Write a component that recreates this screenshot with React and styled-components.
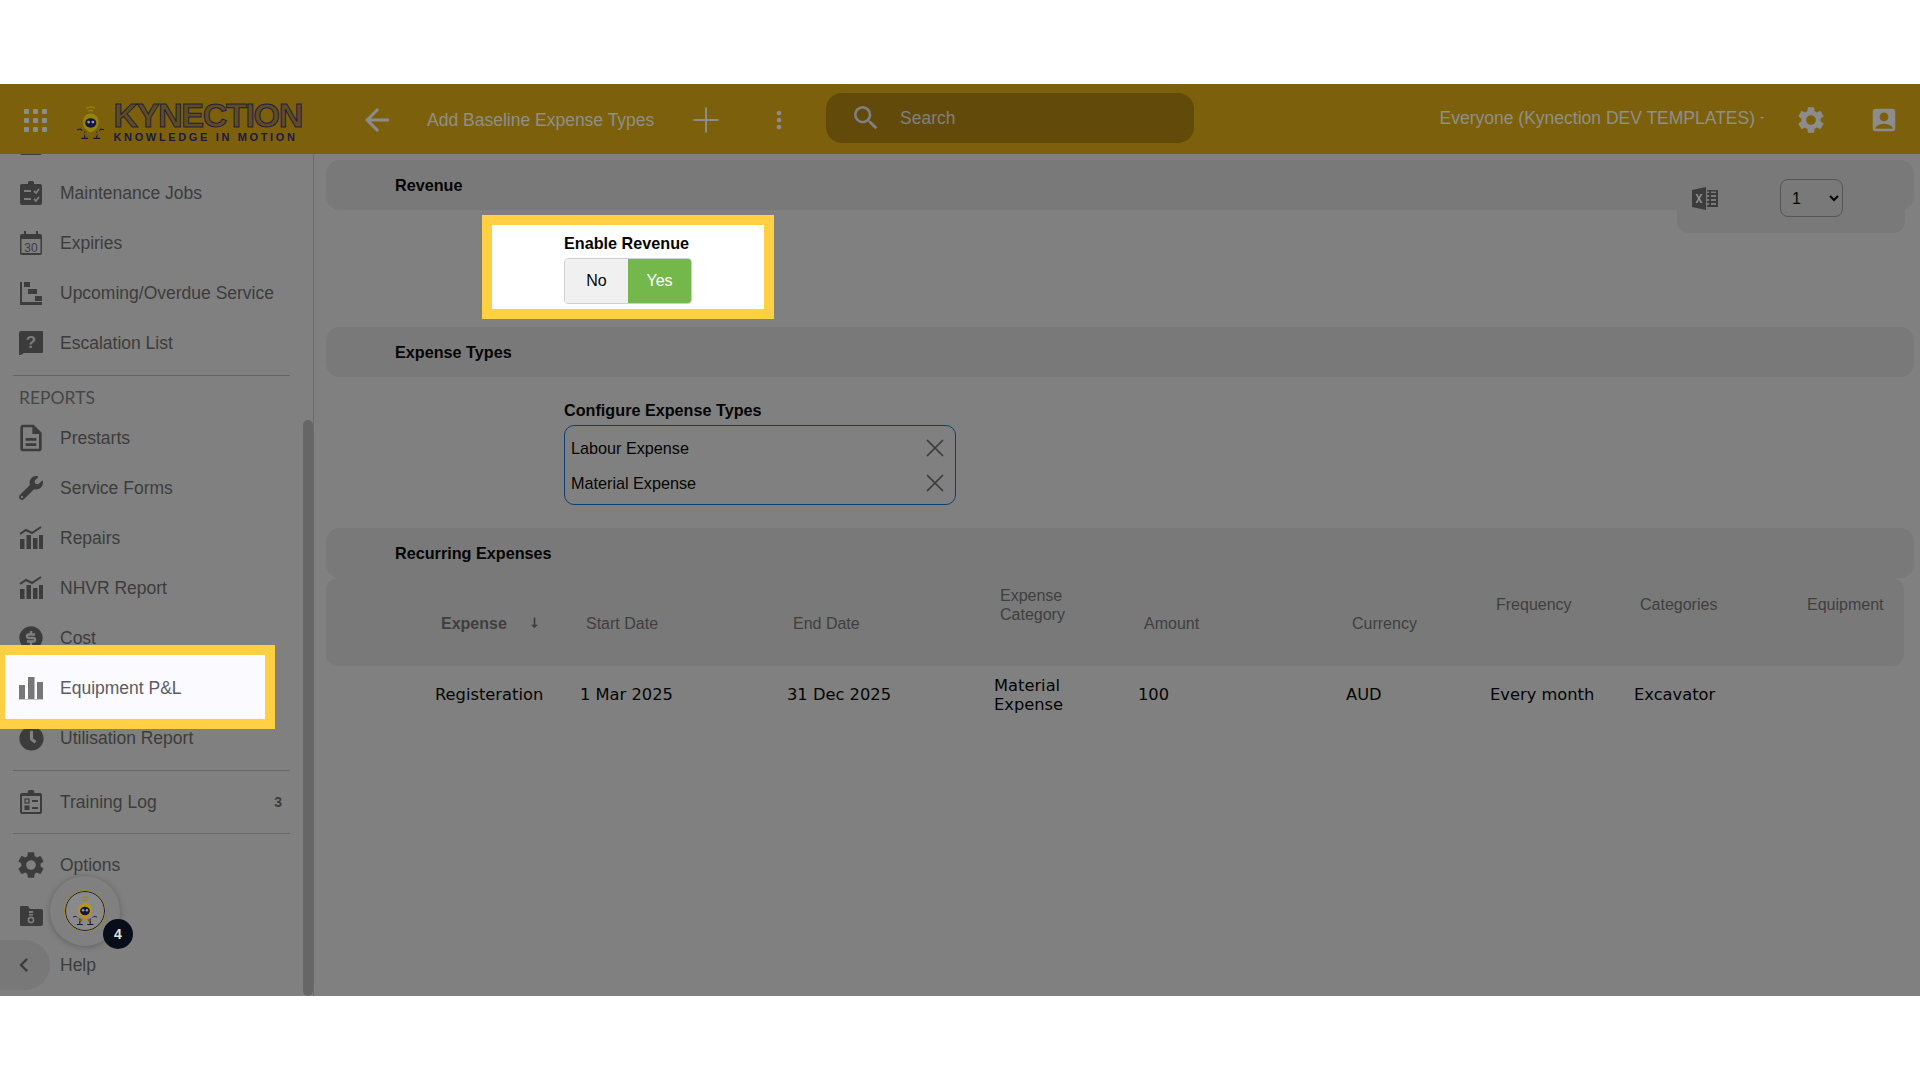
import React from "react";
import styled, { createGlobalStyle } from "styled-components";
import { MdArrowBack, MdSearch, MdSettings, MdAccountBox, MdMoreVert, MdChevronLeft, MdOutlineDescription } from "react-icons/md";
import { FaWrench, FaClock } from "react-icons/fa";
import { RiMoneyDollarCircleFill } from "react-icons/ri";
import { Plus, X } from "lucide-react";

const GlobalStyle = createGlobalStyle`
  html, body {
    margin: 0;
    padding: 0;
    background: #ffffff;
  }
  *, *::before, *::after {
    box-sizing: border-box;
  }
`;

const Svg = ({ children }) => (
  <svg width="24" height="24" viewBox="0 0 24 24" fill="currentColor">{children}</svg>
);

const JobsIcon = () => (
  <Svg>
    <rect x="1" y="3" width="22" height="21" rx="2" />
    <rect x="9" y="0" width="6" height="5" rx="1.5" />
    <path d="M5 10h7M5 18h7M15 10l2 2 3-4M15 18l2 2 3-4" stroke="#7d7d7d" strokeWidth="1.8" fill="none" />
  </Svg>
);

const CalendarIcon = () => (
  <Svg>
    <path d="M1 5a2 2 0 0 1 2-2h2V0h2v3h10V0h2v3h2a2 2 0 0 1 2 2v17a2 2 0 0 1-2 2H3a2 2 0 0 1-2-2V5zm1.500 3v14h19V8H2.500z" fillRule="evenodd" />
    <text x="12" y="20.500" textAnchor="middle" fontSize="12" fontFamily="Liberation Sans, sans-serif">30</text>
  </Svg>
);

const GanttIcon = () => (
  <Svg>
    <path d="M1 1h2v20h20v3H1V1z" />
    <rect x="5" y="1" width="6" height="5" />
    <rect x="9" y="8" width="9" height="5" />
    <rect x="16" y="15" width="7" height="5" />
  </Svg>
);

const QuestionIcon = () => (
  <Svg>
    <path d="M2 0h21a1 1 0 0 1 1 1v20a1 1 0 0 1-1 1H5l-5 3V2a2 2 0 0 1 2-2z" />
    <text x="12" y="17" textAnchor="middle" fontSize="17" fontWeight="700" fill="#7d7d7d" fontFamily="Liberation Sans, sans-serif">?</text>
  </Svg>
);

const TrendIcon = () => (
  <Svg>
    <rect x="1" y="13" width="4.500" height="10" />
    <rect x="7.500" y="9" width="4.500" height="14" />
    <rect x="14" y="12" width="4.500" height="11" />
    <rect x="20" y="9" width="4" height="14" />
    <path d="M1 8l6-4 6 3 9-6" stroke="currentColor" strokeWidth="2" fill="none" />
  </Svg>
);

const BarsIcon = () => (
  <Svg>
    <rect x="0" y="9" width="6" height="14" />
    <rect x="9" y="1" width="6.500" height="22" />
    <rect x="18" y="6" width="6" height="17" />
    <rect x="0" y="23" width="24" height="1" opacity="0.4" />
  </Svg>
);

const TrainingIcon = () => (
  <Svg>
    <path d="M3 3h5.500a3.500 3.500 0 0 1 7 0H21a2 2 0 0 1 2 2v17a2 2 0 0 1-2 2H3a2 2 0 0 1-2-2V5a2 2 0 0 1 2-2zm0 3v16h18V6H3z" fillRule="evenodd" />
    <rect x="6" y="9" width="4" height="4" fill="none" stroke="currentColor" strokeWidth="1.2" />
    <rect x="5.500" y="15.500" width="5" height="4.500" />
    <rect x="13" y="10" width="6" height="2" />
    <rect x="13" y="17" width="6" height="2" />
  </Svg>
);

const FolderIcon = () => (
  <Svg>
    <path d="M1 4a1 1 0 0 1 1-1h7l2 3h11a2 2 0 0 1 2 2v13a2 2 0 0 1-2 2H2a1 1 0 0 1-1-1V4z" />
    <path d="M10 8h4v2h-4zM10 11h4v1.500h-4z" fill="#7d7d7d" />
    <circle cx="12" cy="17" r="2.600" fill="none" stroke="#7d7d7d" strokeWidth="1.600" />
  </Svg>
);

const ClippedIcon = () => (
  <Svg>
    <rect x="1" y="0" width="22" height="24" rx="2" />
  </Svg>
);

const ExcelIcon = () => (
  <svg width="26" height="23" viewBox="0 0 26 23" fill="currentColor">
    <path d="M0 3l14-3v23L0 20V3z" />
    <path d="M3.500 7h2l1.500 3 1.500-3h2L8 11.500l2.500 4.500h-2L7 13l-1.500 3h-2L6 11.500 3.500 7z" fill="#8a8a8a" />
    <path d="M15 3h11v17H15v-2h2v-2h-2v-2h2v-2h-2v-2h2V8h-2V6h2V4.500h-2V3zm4 1.500V6h5V4.500h-5zM19 8v2h5V8h-5zm0 4v2h5v-2h-5zm0 4v2h5v-2h-5z" fillRule="evenodd" />
  </svg>
);

const Mascot = ({ size = 32, body = "#94850e" }) => (
  <svg width={size} height={size * 1.22} viewBox="0 0 32 39">
    <path d="M11 3c3-2 7-2 10 0M13 6c2-1 4-1 6 0" stroke="#9a8412" strokeWidth="1.4" fill="none" />
    <path d="M16 9c6 0 9 5 9 11 0 5-4 9-9 11-5-2-9-6-9-11 0-6 3-11 9-11z" fill={body} />
    <ellipse cx="16" cy="20" rx="6.500" ry="5.600" fill="#14163f" />
    <circle cx="13.500" cy="19" r="1.600" fill="#9a9a9a" />
    <circle cx="18.500" cy="19" r="1.600" fill="#9a9a9a" />
    <path d="M0 28l4-1 2 2M32 28l-4-1-2 2" stroke="#14163f" strokeWidth="1.2" fill="none" />
    <path d="M9 30v7M5 38h8M23 30v7M19 38h8" stroke="#14163f" strokeWidth="1.600" fill="none" />
    <path d="M7 31l3 5 3-5zM19 31l3 5 3-5z" fill="#7a5c10" />
  </svg>
);

const Page = styled.div`
  padding: 84px 0;
  width: 1920px;
  height: 1080px;
  overflow: hidden;
  background: #ffffff;
`;

const Shell = styled.div`
  height: 912px;
  background: #808080;
  display: flex;
  flex-direction: column;
  font-family: "Liberation Sans", Arial, sans-serif;
  overflow: hidden;
`;

const TopBar = styled.header`
  height: 70px;
  flex: none;
  padding-top: 2px;
  background: #7c600c;
  display: flex;
  align-items: center;
  color: #8a8a85;
  position: relative;
`;

const AppGrid = styled.div`
  width: 23px;
  margin-left: 24px;
  display: grid;
  grid-template-columns: repeat(3, 5px);
  gap: 4px;
  flex: none;
`;

const AppDot = styled.span`
  width: 5px;
  height: 5px;
  border-radius: 1px;
  background: #8c8c8c;
`;

const Logo = styled.div`
  margin-left: 30px;
  margin-top: 4px;
  width: 225px;
  display: flex;
  align-items: flex-end;
  gap: 9px;
  flex: none;
`;

const LogoWords = styled.div`
  display: flex;
  flex-direction: column;
  color: #1a1a48;
`;

const LogoName = styled.div`
  font-size: 34px;
  line-height: 26px;
  height: 26px;
  font-weight: 700;
  letter-spacing: -1.3px;
  color: rgba(26, 26, 72, 0.3);
  -webkit-text-stroke: 1px #1e1e4a;
  white-space: nowrap;
`;

const LogoTag = styled.div`
  font-size: 11px;
  line-height: 11px;
  font-weight: 700;
  letter-spacing: 2.65px;
  white-space: nowrap;
  margin-top: 4px;
`;

const BackButton = styled.div`
  margin-left: 57px;
  width: 36px;
  display: flex;
  flex: none;
  color: #8c8c8c;
  svg { display: block; }
`;

const Title = styled.div`
  margin-left: 32px;
  font-size: 17.5px;
  white-space: nowrap;
  width: 227px;
  color: #8f8f8a;
`;

const PlusButton = styled.div`
  margin-left: 32px;
  display: flex;
  color: #8c8c8c;
`;

const MoreButton = styled.div`
  margin-left: 39px;
  display: flex;
  color: #8c8c8c;
`;

const SearchBox = styled.div`
  margin-left: 33px;
  width: 368px;
  height: 50px;
  margin-top: -4px;
  border-radius: 16px;
  background: #624b0a;
  display: flex;
  align-items: center;
  padding-left: 24px;
  gap: 18px;
  color: #808080;
  font-size: 17.5px;
`;

const UserArea = styled.div`
  margin-left: auto;
  display: flex;
  align-items: center;
  padding-right: 21px;
  margin-top: -4px;
`;

const Team = styled.div`
  font-size: 17.5px;
  white-space: nowrap;
  color: #8f8f8a;
`;

const Caret = styled.span`
  width: 0;
  height: 0;
  margin-left: 5px;
  border-left: 2.5px solid transparent;
  border-right: 2.5px solid transparent;
  border-top: 2.5px solid #8f8f8a;
`;

const TopIcon = styled.div`
  display: flex;
  margin-left: ${(p) => p.$gap}px;
  color: #8c8c8c;
  margin-top: 4px;
`;

const Body = styled.div`
  flex: 1;
  min-height: 0;
  display: flex;
`;

const Sidebar = styled.aside`
  width: 314px;
  flex: none;
  border-right: 1px solid #6b6b6b;
  position: relative;
  overflow: hidden;
  color: #3c3c3c;
`;

const SideList = styled.nav`
  margin-top: -36px;
  width: 303px;
`;

const SideRow = styled.div`
  height: 50px;
  display: flex;
  align-items: center;
  padding-left: 19px;
  padding-right: 21px;
  gap: 17px;
  font-size: 17.5px;
  position: relative;
  z-index: ${(p) => (p.$active ? 3 : "auto")};
  color: ${(p) => (p.$active ? "#5c5c62" : "#3c3c3c")};

  ${(p) => p.$active && `
    &::before {
      content: "";
      position: absolute;
      left: 0;
      top: -18px;
      bottom: -16px;
      width: 275px;
      background: #fafaff;
      border: 10px solid #ffd043;
      border-left-width: 5px;
    }
    svg { color: #777777; }
  `}
`;

const SideIcon = styled.span`
  position: relative;
  display: flex;
  width: 24px;
  justify-content: center;
  flex: none;
`;

const SideLabel = styled.span`
  position: relative;
  white-space: nowrap;
`;

const Count = styled.span`
  margin-left: auto;
  font-size: 14px;
  font-weight: 700;
`;

const Divider = styled.hr`
  border: 0;
  height: 1px;
  background: #666666;
  margin: ${(p) => p.$top}px 13px ${(p) => p.$bottom}px;
`;

const SideHeading = styled.div`
  height: 37px;
  padding: 13px 0 0 19px;
  font-family: Lato, sans-serif;
  font-size: 17.5px;
  line-height: 18px;
  color: #464646;
`;

const ScrollThumb = styled.div`
  position: absolute;
  right: 0;
  top: 266px;
  bottom: 0;
  width: 10px;
  border-radius: 5px;
  background: #666666;
`;

const CollapsePill = styled.div`
  position: absolute;
  left: 0;
  top: 786px;
  width: 50px;
  height: 50px;
  border-radius: 0 25px 25px 0;
  background: #787878;
  display: flex;
  align-items: center;
  padding-left: 10px;
  color: #3c3c3c;
`;

const FloatingButton = styled.div`
  position: absolute;
  left: 50px;
  top: 722px;
  width: 70px;
  height: 70px;
  border-radius: 50%;
  background: #808080;
  box-shadow: 0 1px 6px rgba(0, 0, 0, 0.25);
  display: flex;
  align-items: center;
  justify-content: center;
`;

const Seal = styled.div`
  width: 40px;
  height: 40px;
  border-radius: 50%;
  border: 1.5px solid #1a1a48;
  outline: 1px solid #a08a1a;
  display: flex;
  align-items: center;
  justify-content: center;
  background: #8a8a8a;
`;

const Badge = styled.div`
  position: absolute;
  left: 103px;
  top: 765px;
  width: 30px;
  height: 30px;
  border-radius: 50%;
  background: #080d1a;
  color: #e0e0e0;
  display: flex;
  align-items: center;
  justify-content: center;
  font-size: 14px;
  font-weight: 700;
`;

const Content = styled.main`
  flex: 1;
  min-width: 0;
  padding: 6px 6px 0 12px;
  position: relative;
`;

const Band = styled.div`
  height: 50px;
  border-radius: 14px;
  background: #797979;
  display: flex;
  align-items: center;
  padding: 1px 0 0 69px;
  font-size: 16.2px;
  font-weight: 700;
  color: #050505;
`;

const ExportPanel = styled.div`
  position: absolute;
  top: 22px;
  right: 15px;
  width: 228px;
  height: 57px;
  border-radius: 0 0 12px 12px;
  background: #797979;
  display: flex;
  align-items: center;
  padding: 0 62px 13px 15px;
  justify-content: space-between;
  color: #3c3c3c;
`;

const PageSelect = styled.select`
  width: 63px;
  height: 38px;
  border: 1px solid #555555;
  border-radius: 8px;
  background: transparent;
  font-family: "Liberation Sans", Arial, sans-serif;
  font-size: 16px;
  color: #050505;
  padding-left: 7px;
`;

const HighlightCard = styled.div`
  width: 292px;
  height: 104px;
  margin: 5px 0 8px 156px;
  border: 10px solid #ffd043;
  background: #ffffff;
  padding: 8px 0 0 72px;
`;

const FieldLabel = styled.div`
  font-size: 16.2px;
  line-height: 20px;
  font-weight: 700;
  color: #050505;
`;

const Toggle = styled.div`
  display: flex;
  width: 128px;
  height: 46px;
  margin-top: 5px;
  border: 1px solid #cfcfcf;
  border-radius: 4px;
  overflow: hidden;
`;

const ToggleOption = styled.div`
  flex: 1;
  display: flex;
  align-items: center;
  justify-content: center;
  font-size: 16px;
  background: ${(p) => (p.$on ? "#74b74a" : "#f0f0f0")};
  color: ${(p) => (p.$on ? "#ffffff" : "#050505")};
`;

const ConfigureBlock = styled.div`
  margin: 23px 0 23px 238px;
  width: 392px;
`;

const ChipBox = styled.div`
  margin-top: 5px;
  height: 80px;
  border: 1px solid #0f4170;
  border-radius: 10px;
  padding: 5px 6px;
  color: #050505;
  font-size: 16.2px;
`;

const ChipRow = styled.div`
  height: 35px;
  display: flex;
  align-items: center;
  justify-content: space-between;
  svg { color: #3c3c3c; margin: -2px -1px 0 0; }
`;

const HeaderBand = styled.div`
  margin-right: 10px;
  height: 88px;
  padding-top: 1px;
  border-radius: 12px;
  background: #797979;
  padding-left: 109px;
  display: grid;
  grid-template-columns: 145px 207px 207px 144px 208px 144px 144px 167px 1fr;
  color: #3f3f3f;
  font-size: 16px;
`;

const HeadCell = styled.div`
  padding: ${(p) => p.$top}px 0 0 6px;
  line-height: 19px;
  font-weight: ${(p) => (p.$bold ? 700 : 400)};
  display: flex;
  gap: 24px;
  white-space: pre-line;
`;

const SortArrow = styled.svg`
  margin-top: 2px;
`;

const DataRow = styled.div`
  height: 56px;
  padding: 1px 0 0 109px;
  display: grid;
  grid-template-columns: 145px 207px 207px 144px 208px 144px 144px 167px 1fr;
  align-items: center;
  font-family: "DejaVu Sans", sans-serif;
  font-size: 16.3px;
  line-height: 19px;
  color: #050505;
  white-space: pre-line;
`;

const topItems = [
  { icon: <ClippedIcon />, label: "" },
  { icon: <JobsIcon />, label: "Maintenance Jobs" },
  { icon: <CalendarIcon />, label: "Expiries" },
  { icon: <GanttIcon />, label: "Upcoming/Overdue Service" },
  { icon: <QuestionIcon />, label: "Escalation List" },
];

const reportItems = [
  { icon: <MdOutlineDescription size={32} style={{ flex: "none" }} />, label: "Prestarts" },
  { icon: <FaWrench size={24} />, label: "Service Forms" },
  { icon: <TrendIcon />, label: "Repairs" },
  { icon: <TrendIcon />, label: "NHVR Report" },
  { icon: <RiMoneyDollarCircleFill size={28} style={{ flex: "none" }} />, label: "Cost" },
  { icon: <BarsIcon />, label: "Equipment P&L", active: true },
  { icon: <FaClock size={25} style={{ flex: "none" }} />, label: "Utilisation Report" },
];

const headers = [
  { label: "Expense", top: 35, bold: true, sort: true },
  { label: "Start Date", top: 35 },
  { label: "End Date", top: 35 },
  { label: "Expense\nCategory", top: 7 },
  { label: "Amount", top: 35 },
  { label: "Currency", top: 35 },
  { label: "Frequency", top: 16 },
  { label: "Categories", top: 16 },
  { label: "Equipment", top: 16 },
];

const cells = ["Registeration", "1 Mar 2025", "31 Dec 2025", "Material\nExpense", "100", "AUD", "Every month", "Excavator", ""];

const SideItem = ({ item }) => (
  <SideRow $active={item.active}>
    <SideIcon>{item.icon}</SideIcon>
    <SideLabel>{item.label}</SideLabel>
    {item.count && <Count>{item.count}</Count>}
  </SideRow>
);

const App = () => {
  return (
    <Page>
      <GlobalStyle />
      <Shell>
        <TopBar>
          <AppGrid>
            {Array.from({ length: 9 }).map((_, i) => <AppDot key={i} />)}
          </AppGrid>
          <Logo>
            <Mascot />
            <LogoWords>
              <LogoName>KYNECTION</LogoName>
              <LogoTag>KNOWLEDGE IN MOTION</LogoTag>
            </LogoWords>
          </Logo>
          <BackButton><MdArrowBack size={36} /></BackButton>
          <Title>Add Baseline Expense Types</Title>
          <PlusButton><Plus size={40} strokeWidth={1.2} /></PlusButton>
          <MoreButton><MdMoreVert size={28} /></MoreButton>
          <SearchBox>
            <MdSearch size={32} />
            <span>Search</span>
          </SearchBox>
          <UserArea>
            <Team>Everyone (Kynection DEV TEMPLATES)</Team>
            <Caret />
            <TopIcon $gap={31}><MdSettings size={32} /></TopIcon>
            <TopIcon $gap={42}><MdAccountBox size={30} /></TopIcon>
          </UserArea>
        </TopBar>
        <Body>
          <Sidebar>
            <SideList>
              {topItems.map((item, i) => <SideItem key={i} item={item} />)}
              <Divider $top={7} $bottom={0} />
              <SideHeading>REPORTS</SideHeading>
              {reportItems.map((item) => <SideItem key={item.label} item={item} />)}
              <Divider $top={7} $bottom={6} />
              <SideItem item={{ icon: <TrainingIcon />, label: "Training Log", count: "3" }} />
              <Divider $top={6} $bottom={6} />
              <SideItem item={{ icon: <MdSettings size={32} style={{ flex: "none" }} />, label: "Options" }} />
              <SideItem item={{ icon: <FolderIcon />, label: "" }} />
              <SideItem item={{ icon: null, label: "Help" }} />
            </SideList>
            <ScrollThumb />
            <CollapsePill><MdChevronLeft size={28} /></CollapsePill>
            <FloatingButton>
              <Seal><Mascot size={24} body="#b8960f" /></Seal>
            </FloatingButton>
            <Badge>4</Badge>
          </Sidebar>
          <Content>
            <Band>Revenue</Band>
            <ExportPanel>
              <ExcelIcon />
              <PageSelect defaultValue="1">
                <option value="1">1</option>
              </PageSelect>
            </ExportPanel>
            <HighlightCard>
              <FieldLabel>Enable Revenue</FieldLabel>
              <Toggle>
                <ToggleOption>No</ToggleOption>
                <ToggleOption $on>Yes</ToggleOption>
              </Toggle>
            </HighlightCard>
            <Band>Expense Types</Band>
            <ConfigureBlock>
              <FieldLabel>Configure Expense Types</FieldLabel>
              <ChipBox>
                <ChipRow>Labour Expense<X size={30} strokeWidth={1.4} /></ChipRow>
                <ChipRow>Material Expense<X size={30} strokeWidth={1.4} /></ChipRow>
              </ChipBox>
            </ConfigureBlock>
            <Band>Recurring Expenses</Band>
            <HeaderBand>
              {headers.map((h) => (
                <HeadCell key={h.label} $top={h.top} $bold={h.bold}>
                  {h.label}
                  {h.sort && (
                    <SortArrow width="7" height="14" viewBox="0 0 8 14" fill="currentColor">
                      <path d="M3 1h2v8h3l-4 4-4-4h3z" />
                    </SortArrow>
                  )}
                </HeadCell>
              ))}
            </HeaderBand>
            <DataRow>
              {cells.map((c, i) => <div key={i}>{c}</div>)}
            </DataRow>
          </Content>
        </Body>
      </Shell>
    </Page>
  );
};

export default App;
